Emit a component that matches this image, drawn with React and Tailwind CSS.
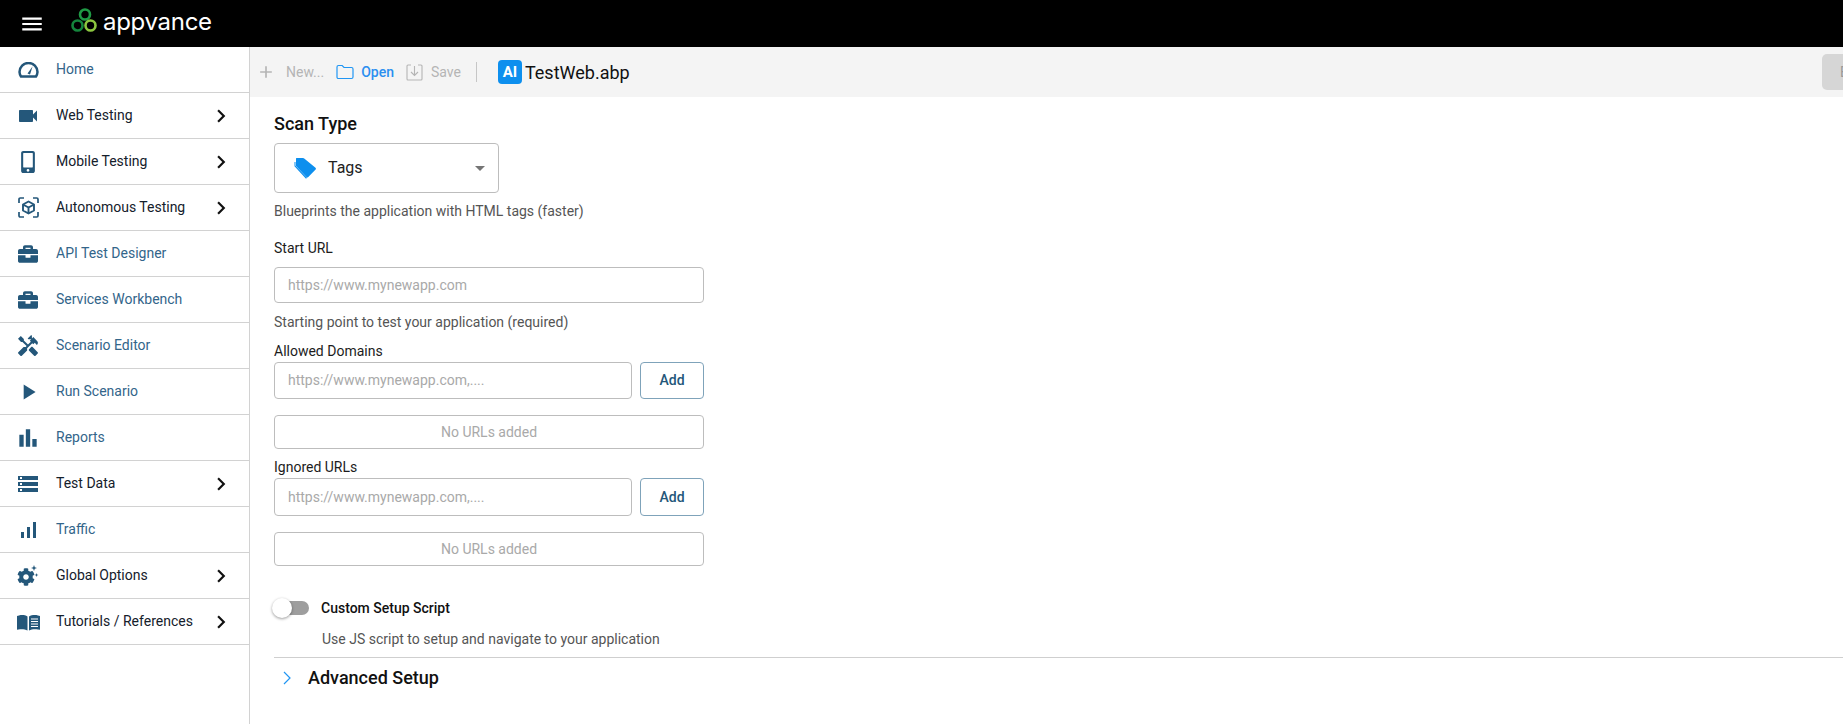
import React from 'react';
import { FaMobileAlt, FaBriefcase, FaCog } from 'react-icons/fa';
import { MdBarChart, MdSignalCellularAlt, MdPlayArrow, MdChevronRight, MdMenu, MdAdd, MdVideocam, MdHandyman, MdStorage } from 'react-icons/md';

const Logo = () => (
  <svg width="26" height="24" viewBox="0 0 26 24" fill="none" className="shrink-0 mt-[-7px]">
    <circle cx="14" cy="6.500" r="5" stroke="#1f9a45" strokeWidth="2.600" />
    <circle cx="6.500" cy="17.500" r="5" stroke="#14853c" strokeWidth="2.600" />
    <circle cx="19.500" cy="17.500" r="5" stroke="#8cc63f" strokeWidth="2.600" />
  </svg>
);

const GaugeIcon = () => (
  <svg width="21" height="16" viewBox="0 0 21 16" fill="none">
    <path d="M3 14.500h15a9 9 0 0 0 1.500-4.500A9 9 0 0 0 1.500 10 9 9 0 0 0 3 14.500z" stroke="#24577a" strokeWidth="2.500" strokeLinejoin="round" />
    <path d="M9.500 11.500 14.500 4.500l-2.500 8z" fill="#24577a" />
  </svg>
);

const CubeIcon = () => (
  <svg width="21" height="21" viewBox="0 0 21 21" fill="none" stroke="#24577a" strokeWidth="1.700">
    <path d="M1 6V2.200C1 1.500 1.500 1 2.200 1H6M15 1h3.800c.7 0 1.200.5 1.200 1.200V6M20 15v3.800c0 .7-.5 1.200-1.200 1.200H15M6 20H2.200C1.500 20 1 19.500 1 18.800V15" />
    <path d="M10.500 4.500 16 7.500v6l-5.500 3-5.500-3v-6zM5 7.500l5.500 3 5.500-3M10.500 10.500v6" strokeWidth="1.900" strokeLinejoin="round" />
  </svg>
);

const GearsIcon = () => (
  <span className="relative block w-[22px] h-[20px]">
    <FaCog size={18} color="#24577a" className="absolute left-0 bottom-0" />
    <svg width="10" height="14" viewBox="0 0 10 14" className="absolute right-0 top-[-1px]" fill="#24577a">
      <path d="M5 0l.8 2.200L8 3 5.800 3.800 5 6 4.200 3.800 2 3l2.200-.8zM7.500 8l.5 1.500 1.500.5-1.500.5-.5 1.500-.5-1.500L5.500 10l1.500-.5z" />
    </svg>
  </span>
);

const BookIcon = () => (
  <svg width="23" height="18" viewBox="0 0 23 17">
    <path d="M0 2.500 2 2c3-.8 6-.5 8.500 1v14C8 15.700 4.500 15.500 1.500 16L0 16.200z" fill="#24577a" />
    <path d="M12 3c2.500-1.500 6-1.800 9-1l2 .500v13.700l-2-.2c-3-.5-6.500-.3-9 1z" fill="#24577a" />
    <path d="M14 5.500h7M14 8h7M14 10.500h7M14 13h7" stroke="#fff" strokeWidth="1" />
  </svg>
);

const TagIcon = () => (
  <svg width="22" height="21" viewBox="0 0 22 21" fill="#0d8fee">
    <path d="M2.500 0H9c.5 0 .9.2 1.200.5l11.300 9.300c.5.4.6 1.100.1 1.600l-7.300 7.700c-.4.500-1.100.5-1.600.1L2 8V.5c0-.3.200-.5.500-.5z" />
    <path d="M.5 4 .5 8.300 12 20.700l1-1L1.500 7.700V4z" />
  </svg>
);

const navItems = [
  { label: 'Home', icon: <GaugeIcon /> },
  { label: 'Web Testing', icon: <MdVideocam size={24} color="#24577a" />, sub: true },
  { label: 'Mobile Testing', icon: <FaMobileAlt size={22} color="#24577a" />, sub: true },
  { label: 'Autonomous Testing', icon: <CubeIcon />, sub: true },
  { label: 'API Test Designer', icon: <FaBriefcase size={20} color="#24577a" /> },
  { label: 'Services Workbench', icon: <FaBriefcase size={20} color="#24577a" /> },
  { label: 'Scenario Editor', icon: <MdHandyman size={24} color="#24577a" /> },
  { label: 'Run Scenario', icon: <MdPlayArrow size={26} color="#24577a" /> },
  { label: 'Reports', icon: <MdBarChart size={26} color="#24577a" /> },
  { label: 'Test Data', icon: <MdStorage size={24} color="#24577a" />, sub: true },
  { label: 'Traffic', icon: <MdSignalCellularAlt size={24} color="#24577a" /> },
  { label: 'Global Options', icon: <GearsIcon />, sub: true },
  { label: 'Tutorials / References', icon: <BookIcon />, sub: true },
];

const NavRow = ({ item }) => (
  <div className="flex items-center h-[46px] border-b border-[#d2d2d2]">
    <div className="w-[56px] flex justify-center shrink-0">{item.icon}</div>
    <span className={`text-[14px] ${item.sub ? 'text-[#14202b]' : 'text-[#33658a]'}`}>{item.label}</span>
    {item.sub && (
      <MdChevronRight size={26} color="#111" className="ml-auto mr-[15px]" />
    )}
  </div>
);

const UrlList = ({ label, inputHeight }) => (
  <div>
    <div className="text-[14px] leading-[21px] text-[#1c1c1c]">{label}</div>
    <div className={`flex gap-[8px] ${inputHeight}`}>
      <div className="flex-1 flex items-center px-[13px] border border-[#bdbdbd] rounded-[4px] text-[14px] text-[#a9a9a9]">
        https://www.mynewapp.com,....
      </div>
      <button className="w-[64px] border border-[#7fa3ba] rounded-[4px] text-[14px] font-medium text-[#24577a]">Add</button>
    </div>
    <div className="mt-[16px] h-[34px] flex items-center justify-center border border-[#bdbdbd] rounded-[4px] text-[14px] text-[#a9a9a9]">
      No URLs added
    </div>
  </div>
);

export default function App() {
  return (
    <div className="h-screen overflow-hidden flex flex-col bg-white font-['Roboto',sans-serif]">
      {/* Top bar */}
      <div className="h-[47px] bg-black flex items-center shrink-0">
        <MdMenu size={26} color="#fff" className="ml-[19px]" />
        <div className="ml-[26px] flex items-center gap-[6px]">
          <Logo />
          <span className="text-[24px] leading-none text-white font-['Inter',sans-serif] font-normal tracking-[-0.3px] mt-[-4px]">appvance</span>
        </div>
      </div>

      <div className="flex flex-1 min-h-0">
        {/* Sidebar */}
        <aside className="w-[250px] shrink-0 border-r border-[#d2d2d2]">
          {navItems.map((item) => (
            <NavRow key={item.label} item={item} />
          ))}
        </aside>

        <main className="flex-1 min-w-0">
          {/* Toolbar */}
          <div className="h-[50px] bg-[#f4f4f4] flex items-center pl-[6px] overflow-hidden">
            <MdAdd size={20} color="#b5b5b5" />
            <span className="ml-[10px] text-[14px] text-[#b5b5b5]">New...</span>
            <svg width="18" height="16" viewBox="0 0 18 16" fill="none" stroke="#2196f3" strokeWidth="1.200" className="ml-[12px]">
              <path d="M1 3c0-1 .6-1.500 1.500-1.500h3.700L8 3.500h7.500c1 0 1.500.5 1.500 1.500v8c0 1-.5 1.500-1.500 1.500h-13C1.600 14.500 1 14 1 13z" />
            </svg>
            <span className="ml-[7px] text-[14px] font-medium text-[#2b8ff0]">Open</span>
            <svg width="17" height="17" viewBox="0 0 17 17" fill="none" stroke="#b5b5b5" strokeWidth="1.100" className="ml-[12px]">
              <path d="M5 1H2a1 1 0 0 0-1 1v13a1 1 0 0 0 1 1h13a1 1 0 0 0 1-1V2a1 1 0 0 0-1-1h-3" />
              <path d="M8.500 2v9M5 8l3.500 3.500L12 8" />
            </svg>
            <span className="ml-[8px] text-[14px] text-[#b5b5b5]">Save</span>
            <div className="ml-[15px] w-px h-[20px] bg-[#c6c6c6]" />
            <div className="ml-[21px] w-[24px] h-[24px] rounded-[4px] bg-[#0d8fee] flex items-center justify-center text-white text-[15px] font-bold">AI</div>
            <span className="ml-[3px] text-[18px] text-[#111]">TestWeb.abp</span>
            <button className="ml-auto mr-[-79px] w-[100px] h-[36px] shrink-0 rounded-[5px] bg-[#d6d6d6] text-left pl-[18px] text-[14px] text-[#9a9a9a]">Execute</button>
          </div>

          {/* Form */}
          <div className="pl-[24px]">
            <div className="w-[430px]">
              <h2 className="pt-[16px] text-[18px] leading-[22px] font-medium text-[#111]">Scan Type</h2>
              <div className="mt-[8px] w-[225px] h-[50px] flex items-center border border-[#bdbdbd] rounded-[4px] pl-[19px] pr-[13px]">
                <TagIcon />
                <span className="ml-[12px] text-[16px] text-[#222]">Tags</span>
                <span className="ml-auto w-0 h-0 border-x-[5px] border-x-transparent border-t-[5px] border-t-[#757575]" />
              </div>
              <p className="mt-[9px] text-[14px] leading-[18px] text-[#555]">Blueprints the application with HTML tags (faster)</p>
              <div className="mt-[18px] text-[14px] leading-[20px] text-[#1c1c1c]">Start URL</div>
              <div className="mt-[9px] h-[36px] flex items-center px-[13px] border border-[#bdbdbd] rounded-[4px] text-[14px] text-[#a9a9a9]">
                https://www.mynewapp.com
              </div>
              <p className="mt-[10px] text-[14px] leading-[18px] text-[#555]">Starting point to test your application (required)</p>
              <div className="mt-[10px] flex flex-col gap-[8px]">
                <UrlList label="Allowed Domains" inputHeight="h-[37px]" />
                <UrlList label="Ignored URLs" inputHeight="h-[38px]" />
              </div>

              <div className="mt-[32px] flex items-center h-[20px]">
                <div className="relative w-[37px] h-[14px] ml-[-2px]">
                  <div className="absolute left-[8px] right-0 inset-y-0 rounded-full bg-[#9e9e9e]" />
                  <div className="absolute left-0 top-[-3px] w-[20px] h-[20px] rounded-full bg-white shadow-[0_1px_3px_rgba(0,0,0,0.4)]" />
                </div>
                <span className="ml-[12px] text-[14px] font-medium text-[#111]">Custom Setup Script</span>
              </div>
              <p className="mt-[12px] ml-[48px] text-[14px] leading-[18px] text-[#555] whitespace-nowrap">Use JS script to setup and navigate to your application</p>
            </div>
            <div className="mt-[9px] border-t border-[#cfcfcf] flex items-center h-[40px]">
              <svg width="10" height="16" viewBox="0 0 10 16" fill="none" stroke="#2196f3" strokeWidth="1.200" className="ml-[8px]">
                <path d="M2 2l6 6-6 6" />
              </svg>
              <span className="ml-[16px] text-[18px] font-medium text-[#111]">Advanced Setup</span>
            </div>
          </div>
        </main>
      </div>
    </div>
  );
}
